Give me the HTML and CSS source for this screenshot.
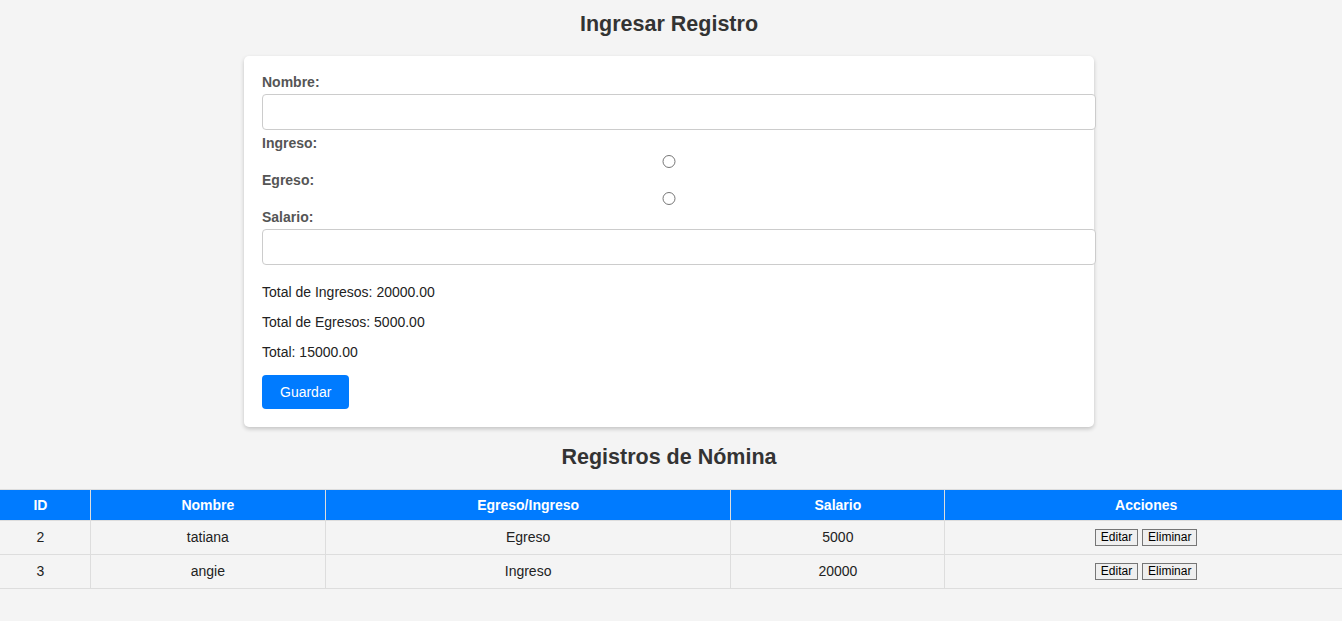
FILE: index.html
```html
<!DOCTYPE html>
<html lang="es">
<head>
<meta charset="utf-8">
<title>Nómina</title>
<link rel="stylesheet" href="styles.css">
</head>
<body>
<div class="page">
  <h2 class="title">Ingresar Registro</h2>
  <form class="card">
    <label class="lbl">Nombre:</label>
    <input class="field" type="text">
    <label class="lbl">Ingreso:</label>
    <input class="radio" type="radio" name="tipo">
    <label class="lbl">Egreso:</label>
    <input class="radio" type="radio" name="tipo">
    <label class="lbl">Salario:</label>
    <input class="field" type="text">
    <div class="totals">
      <p class="total">Total de Ingresos: 20000.00</p>
      <p class="total">Total de Egresos: 5000.00</p>
      <p class="total">Total: 15000.00</p>
    </div>
    <button class="save" type="button">Guardar</button>
  </form>
  <h2 class="title title-table">Registros de Nómina</h2>
  <table class="grid">
    <colgroup>
      <col class="c-id"><col class="c-name"><col class="c-type"><col class="c-sal"><col class="c-act">
    </colgroup>
    <thead>
      <tr><th>ID</th><th>Nombre</th><th>Egreso/Ingreso</th><th>Salario</th><th>Acciones</th></tr>
    </thead>
    <tbody>
      <tr><td>2</td><td>tatiana</td><td>Egreso</td><td>5000</td><td><button class="act" type="button">Editar</button> <button class="act" type="button">Eliminar</button></td></tr>
      <tr><td>3</td><td>angie</td><td>Ingreso</td><td>20000</td><td><button class="act" type="button">Editar</button> <button class="act" type="button">Eliminar</button></td></tr>
    </tbody>
  </table>
</div>
</body>
</html>
```
FILE: styles.css
```css
html, body {
  overflow-x: hidden;
}
body {
  margin: 0;
  background: #f4f4f4;
  font-family: "Liberation Sans", Arial, sans-serif;
  font-size: 14px;
  color: #222;
}
.page {
  width: 1338px;
}
.title {
  text-align: center;
  font-size: 21.5px;
  line-height: 25px;
  color: #333;
  margin: 12px 0 19px;
}
.title-table {
  margin: 18px 0 19px;
}
.card {
  width: 814px;
  margin: 0 auto;
  padding: 18px;
  background: #fff;
  border-radius: 5px;
  box-shadow: 0 2px 4px rgba(0, 0, 0, 0.2);
}
.lbl {
  display: block;
  font-weight: bold;
  line-height: 16px;
  color: #555;
  margin-bottom: 4px;
}
.field {
  display: block;
  width: 100%;
  height: 16px;
  padding: 9px;
  margin: 0 0 5px;
  border: 1px solid #ccc;
  border-radius: 4px;
  font: inherit;
  background: #fff;
}
.radio {
  display: block;
  width: 100%;
  height: 13px;
  margin: 2px 0 4px;
}
.totals {
  margin-top: 19px;
}
.total {
  margin: 14px 0;
  line-height: 16px;
}
.save {
  display: block;
  margin-top: 15px;
  padding: 9px 18px;
  border: none;
  border-radius: 4px;
  background: #007bff;
  color: #fff;
  font: inherit;
  line-height: 16px;
}
.grid {
  width: 1358px;
  margin-left: -10px;
  border-collapse: collapse;
}
.c-id { width: 100px; }
.c-name { width: 235px; }
.c-type { width: 406px; }
.c-sal { width: 214px; }
.c-act { width: 403px; }
.grid th, .grid td {
  border: 1px solid #ddd;
  padding: 7px;
  text-align: center;
  line-height: 16px;
}
.grid td {
  padding-bottom: 8px;
}
.grid th {
  background: #007bff;
  color: #fff;
  font-weight: bold;
}
.act {
  font-family: "Liberation Sans", Arial, sans-serif;
  font-size: 12px;
  line-height: 15px;
  padding: 0 5px;
  border: 1px solid #767676;
  border-radius: 0;
  background: #efefef;
  color: #000;
}
```
